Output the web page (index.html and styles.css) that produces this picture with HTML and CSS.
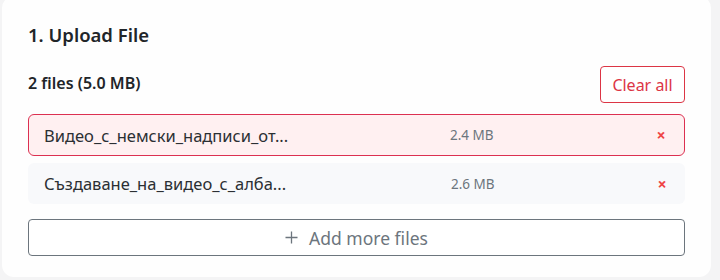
FILE: index.html
```html
<!DOCTYPE html>
<html lang="en">
<head>
<meta charset="utf-8">
<title>Upload File</title>
<link rel="stylesheet" href="styles.css">
</head>
<body>
<div class="page">
  <section class="card">
    <h2 class="card-title">1. Upload File</h2>
    <div class="summary">
      <span class="summary-text">2 files (5.0 MB)</span>
      <button class="btn-clear" type="button">Clear all</button>
    </div>
    <ul class="file-list">
      <li class="file-row file-row--active">
        <span class="file-name">Видео_с_немски_надписи_от...</span>
        <span class="file-size">2.4 MB</span>
        <button class="file-remove" type="button" aria-label="Remove">×</button>
      </li>
      <li class="file-row">
        <span class="file-name">Създаване_на_видео_с_алба...</span>
        <span class="file-size">2.6 MB</span>
        <button class="file-remove" type="button" aria-label="Remove">×</button>
      </li>
    </ul>
    <button class="btn-add" type="button"><svg class="plus" width="13" height="13" viewBox="0 0 13 13"><path d="M6.5 0.5v12M0.5 6.5h12" stroke="currentColor" stroke-width="1.3" fill="none"/></svg><span>Add more files</span></button>
  </section>
</div>
</body>
</html>
```
FILE: styles.css
```css
* { box-sizing: border-box; }
html, body { margin: 0; padding: 0; }
body {
  background: #f4f4f5;
  font-family: "Noto Sans", "Open Sans", sans-serif;
  color: #212529;
  width: 720px;
  height: 280px;
  overflow: hidden;
}
.page {
  padding: 0 9px 0 2px;
}
.card {
  margin-top: -4px;
  height: 281px;
  background: #fefefe;
  border-radius: 12px;
  padding: 24px 26px 0 26px;
}
.card-title {
  margin: 0;
  font-size: 18.5px;
  font-weight: 600;
  line-height: 30px;
}
.summary {
  display: flex;
  justify-content: space-between;
  align-items: center;
  margin-top: 16px;
}
.summary-text {
  font-size: 16px;
  font-weight: 600;
  position: relative;
  top: -2px;
}
.btn-clear {
  font-family: inherit;
  font-size: 16px;
  color: #dc3545;
  background: #fff;
  border: 1px solid #dc3545;
  border-radius: 4px;
  height: 37px;
  padding: 0 10px;
  width: 85px;
  cursor: pointer;
}
.file-list {
  list-style: none;
  margin: 11px 0 0 0;
  padding: 0;
  display: flex;
  flex-direction: column;
  gap: 7px;
}
.file-row {
  display: flex;
  align-items: center;
  height: 42px;
  padding: 0 13px 0 15px;
  border-radius: 6px;
  background: #f8f9fb;
}
.file-row + .file-row {
  height: 41px;
}
.file-row--active {
  background: #fff0f1;
  border: 1px solid #dc3051;
}
.file-name {
  flex: 1;
  font-size: 16.5px;
  color: #2b2f33;
  white-space: nowrap;
  overflow: hidden;
}
.file-row + .file-row .file-name {
  padding-left: 1px;
}
.file-size {
  width: 201px;
  font-size: 13.5px;
  color: #6c757d;
}
.file-remove {
  width: 20px;
  padding: 0;
  border: 0;
  background: none;
  color: #ef4444;
  font-family: inherit;
  font-size: 16px;
  font-weight: 700;
  line-height: 1;
  cursor: pointer;
}
.btn-add {
  display: flex;
  align-items: center;
  justify-content: center;
  gap: 11px;
  width: 100%;
  margin-top: 15px;
  height: 37px;
  font-family: inherit;
  font-size: 17.5px;
  color: #6c757d;
  background: #fff;
  border: 1px solid #6c757d;
  border-radius: 4px;
  cursor: pointer;
}
.plus {
  display: block;
}
```
